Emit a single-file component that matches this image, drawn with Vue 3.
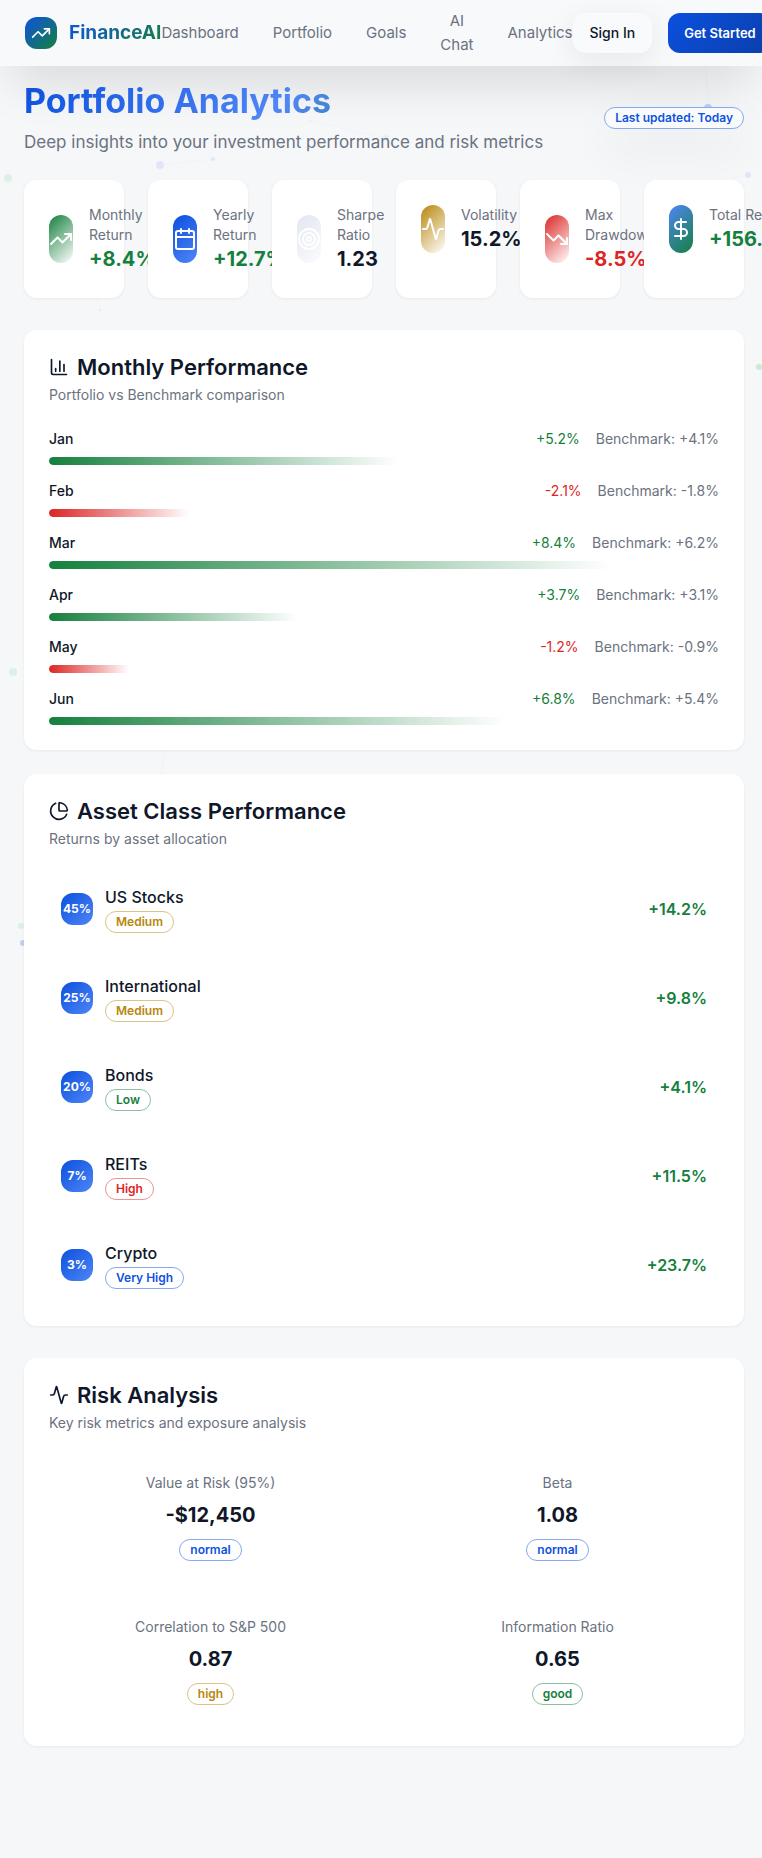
<script setup>
const navLinks = ['Dashboard', 'Portfolio', 'Goals', 'AI Chat', 'Analytics']

const metrics = [
  { label: 'Monthly Return', value: '+8.4%', tone: 'up', fill: 'green', icon: 'trending-up' },
  { label: 'Yearly Return', value: '+12.7%', tone: 'up', fill: 'blue', icon: 'calendar' },
  { label: 'Sharpe Ratio', value: '1.23', tone: 'plain', fill: 'pale', icon: 'target' },
  { label: 'Volatility', value: '15.2%', tone: 'plain', fill: 'gold', icon: 'activity' },
  { label: 'Max Drawdown', value: '-8.5%', tone: 'down', fill: 'red', icon: 'trending-down' },
  { label: 'Total Return', value: '+156.8%', tone: 'up', fill: 'mixed', icon: 'dollar' },
]

const months = [
  { name: 'Jan', change: 5.2, benchmark: '+4.1%' },
  { name: 'Feb', change: -2.1, benchmark: '-1.8%' },
  { name: 'Mar', change: 8.4, benchmark: '+6.2%' },
  { name: 'Apr', change: 3.7, benchmark: '+3.1%' },
  { name: 'May', change: -1.2, benchmark: '-0.9%' },
  { name: 'Jun', change: 6.8, benchmark: '+5.4%' },
]

const assets = [
  { name: 'US Stocks', share: '45%', risk: 'Medium', tone: 'gold', gain: '+14.2%' },
  { name: 'International', share: '25%', risk: 'Medium', tone: 'gold', gain: '+9.8%' },
  { name: 'Bonds', share: '20%', risk: 'Low', tone: 'green', gain: '+4.1%' },
  { name: 'REITs', share: '7%', risk: 'High', tone: 'red', gain: '+11.5%' },
  { name: 'Crypto', share: '3%', risk: 'Very High', tone: 'blue', gain: '+23.7%' },
]

const risks = [
  { label: 'Value at Risk (95%)', value: '-$12,450', status: 'normal', tone: 'blue' },
  { label: 'Beta', value: '1.08', status: 'normal', tone: 'blue' },
  { label: 'Correlation to S&P 500', value: '0.87', status: 'high', tone: 'gold' },
  { label: 'Information Ratio', value: '0.65', status: 'good', tone: 'green' },
]

const icons = {
  'trending-up': ['M22 7 13.5 15.5 8.5 10.5 2 17', 'M16 7h6v6'],
  'trending-down': ['M22 17 13.5 8.5 8.5 13.5 2 7', 'M16 17h6v-6'],
  calendar: ['M8 2v4', 'M16 2v4', 'M5 4h14a2 2 0 0 1 2 2v14a2 2 0 0 1-2 2H5a2 2 0 0 1-2-2V6a2 2 0 0 1 2-2z', 'M3 10h18'],
  target: ['M12 2a10 10 0 1 0 0 20 10 10 0 1 0 0-20z', 'M12 6a6 6 0 1 0 0 12 6 6 0 1 0 0-12z', 'M12 10a2 2 0 1 0 0 4 2 2 0 1 0 0-4z'],
  activity: ['M22 12h-2.48a2 2 0 0 0-1.93 1.46l-2.35 8.36a.25.25 0 0 1-.48 0L9.24 2.18a.25.25 0 0 0-.48 0l-2.35 8.36A2 2 0 0 1 4.49 12H2'],
  dollar: ['M12 2v20', 'M17 5H9.5a3.5 3.5 0 0 0 0 7h5a3.5 3.5 0 0 1 0 7H6'],
  chart: ['M3 3v16a2 2 0 0 0 2 2h16', 'M18 17V9', 'M13 17V5', 'M8 17v-3'],
  pie: ['M21 12c.552 0 1.005-.449.95-.998a10 10 0 0 0-8.953-8.951c-.55-.055-.998.398-.998.95v8a1 1 0 0 0 1 1z', 'M21.21 15.89A10 10 0 1 1 8 2.83'],
}

const dots = [
  { x: 8, y: 178, r: 4, c: 'green' },
  { x: 160, y: 165, r: 4, c: 'blue' },
  { x: 213, y: 159, r: 2, c: 'blue' },
  { x: 310, y: 121, r: 1, c: 'green' },
  { x: 386, y: 138, r: 3, c: 'faint' },
  { x: 708, y: 108, r: 4, c: 'strong' },
  { x: 748, y: 175, r: 3, c: 'blue' },
  { x: 100, y: 310, r: 1, c: 'green' },
  { x: 759, y: 367, r: 3, c: 'vivid' },
  { x: 13, y: 672, r: 4, c: 'green' },
  { x: 21, y: 926, r: 3, c: 'green' },
  { x: 23, y: 943, r: 3, c: 'strong' },
]

const signed = (n) => `${n > 0 ? '+' : ''}${n}%`
</script>

<template>
  <div class="page">
    <svg class="particles" aria-hidden="true">
      <path d="M160 165 213 159M310 121 386 138M706 60 708 108M97 296 100 310M165 748 161 776M748 175 730 178" />
      <circle v-for="(d, i) in dots" :key="i" :cx="d.x" :cy="d.y" :r="d.r" :class="d.c" />
    </svg>

    <header class="topbar">
      <a class="brand" href="#">
        <span class="logo">
          <svg class="icon" viewBox="0 0 24 24"><path v-for="p in icons['trending-up']" :key="p" :d="p" /></svg>
        </span>
        <span class="brand-name">FinanceAI</span>
      </a>
      <nav class="nav">
        <a v-for="l in navLinks" :key="l" href="#">{{ l }}</a>
      </nav>
      <div class="actions">
        <button class="btn ghost" type="button">Sign In</button>
        <button class="btn primary" type="button">Get Started</button>
      </div>
    </header>

    <main class="main">
      <div class="intro">
        <div>
          <h1>Portfolio Analytics</h1>
          <p>Deep insights into your investment performance and risk metrics</p>
        </div>
        <span class="badge blue glow">Last updated: Today</span>
      </div>

      <section class="metrics">
        <article v-for="m in metrics" :key="m.label" class="card metric">
          <div class="metric-body">
            <span class="pill" :class="m.fill">
              <svg class="icon" viewBox="0 0 24 24"><path v-for="p in icons[m.icon]" :key="p" :d="p" /></svg>
            </span>
            <div class="metric-text">
              <p class="label">{{ m.label }}</p>
              <p class="value" :class="m.tone">{{ m.value }}</p>
            </div>
          </div>
        </article>
      </section>

      <div class="stack">
        <section class="card">
          <div class="card-head">
            <h2><svg class="icon" viewBox="0 0 24 24"><path v-for="p in icons.chart" :key="p" :d="p" /></svg>Monthly Performance</h2>
            <p>Portfolio vs Benchmark comparison</p>
          </div>
          <div class="months">
            <div v-for="m in months" :key="m.name" class="month">
              <div class="month-row">
                <span class="month-name">{{ m.name }}</span>
                <span class="figures">
                  <span :class="m.change > 0 ? 'up' : 'down'">{{ signed(m.change) }}</span>
                  <span class="muted">Benchmark: {{ m.benchmark }}</span>
                </span>
              </div>
              <div class="track">
                <div class="bar" :class="m.change > 0 ? 'gain' : 'loss'" :style="{ width: Math.abs(m.change) * 10 + '%' }"></div>
              </div>
            </div>
          </div>
        </section>

        <section class="card">
          <div class="card-head">
            <h2><svg class="icon" viewBox="0 0 24 24"><path v-for="p in icons.pie" :key="p" :d="p" /></svg>Asset Class Performance</h2>
            <p>Returns by asset allocation</p>
          </div>
          <div class="assets">
            <div v-for="a in assets" :key="a.name" class="asset">
              <span class="share">{{ a.share }}</span>
              <div class="asset-info">
                <p>{{ a.name }}</p>
                <div class="badge-line"><span class="badge" :class="a.tone">{{ a.risk }}</span></div>
              </div>
              <span class="asset-gain up">{{ a.gain }}</span>
            </div>
          </div>
        </section>
      </div>

      <section class="card">
        <div class="card-head">
          <h2><svg class="icon" viewBox="0 0 24 24"><path v-for="p in icons.activity" :key="p" :d="p" /></svg>Risk Analysis</h2>
          <p>Key risk metrics and exposure analysis</p>
        </div>
        <div class="risks">
          <div v-for="r in risks" :key="r.label" class="risk">
            <p class="label">{{ r.label }}</p>
            <p class="value">{{ r.value }}</p>
            <div class="badge-line"><span class="badge" :class="r.tone">{{ r.status }}</span></div>
          </div>
        </div>
      </section>
    </main>
  </div>
</template>

<style>
body {
  background: #f5f7f9;
}
</style>

<style scoped>
.page {
  position: relative;
  overflow: hidden;
  min-height: 100vh;
  font-family: Inter, "Liberation Sans", sans-serif;
  font-size: 15px;
  line-height: 24px;
  color: #0f1729;
}

.page,
.page * {
  box-sizing: border-box;
}

h1,
h2,
p {
  margin: 0;
}

a {
  color: inherit;
  text-decoration: none;
}

.particles {
  position: absolute;
  top: 0;
  left: 0;
  width: 100%;
  height: 100%;
}

.particles path {
  stroke: #0f52e0;
  stroke-opacity: 0.025;
  fill: none;
}

.particles .blue {
  fill: #dfe7f6;
}

.particles .faint {
  fill: #e8edf7;
}

.particles .strong {
  fill: #c0d0f3;
}

.particles .green {
  fill: #dcf0e6;
}

.particles .vivid {
  fill: #c6ecd6;
}

.icon {
  display: block;
  flex: none;
  width: 24px;
  height: 24px;
  fill: none;
  stroke: currentColor;
  stroke-width: 2;
  stroke-linecap: round;
  stroke-linejoin: round;
}

.topbar {
  position: relative;
  display: flex;
  align-items: center;
  justify-content: space-between;
  padding: 8px 24px;
  border: 1px solid #f8fafb;
  background: #f8f9fb;
  box-shadow: 0 25px 50px -12px rgba(0, 0, 0, 0.15);
}

.brand {
  display: flex;
  flex: none;
  align-items: center;
  gap: 12px;
}

.logo {
  display: flex;
  align-items: center;
  justify-content: center;
  width: 32px;
  height: 32px;
  border-radius: 12px;
  color: #fff;
  background: linear-gradient(135deg, #0f52e0, #15803d);
}

.logo .icon {
  width: 20px;
  height: 20px;
}

.brand-name {
  font-size: 19px;
  line-height: 28px;
  font-weight: 700;
  color: transparent;
  background: linear-gradient(135deg, #0f52e0, #15803d);
  background-clip: text;
}

.nav {
  display: flex;
  align-items: center;
  gap: 34px;
  text-align: center;
  color: #6b7280;
}

.actions {
  display: flex;
  flex: none;
  gap: 16px;
}

.btn {
  height: 40px;
  padding: 0 16px;
  border: 0;
  border-radius: 12px;
  font: inherit;
  font-size: 14px;
  font-weight: 500;
  white-space: nowrap;
}

.ghost {
  color: #0f1729;
  background: #f8fafb;
  border: 1px solid #fafbfc;
  box-shadow: 0 8px 32px rgba(15, 23, 41, 0.08);
}

.primary {
  font-size: 13px;
  font-weight: 600;
  color: #fff;
  background: linear-gradient(135deg, #0b50de, #0a3fac);
}

.main {
  position: relative;
  padding: 14px 18px 112px 24px;
}

.intro {
  display: flex;
  align-items: center;
  justify-content: space-between;
  margin-bottom: 24px;
}

.intro h1 {
  font-size: 34px;
  line-height: 42px;
  font-weight: 700;
  color: transparent;
  background: linear-gradient(135deg, #0b4fdc, #4f86f7 50%, #15803d);
  background-clip: text;
}

.intro p {
  margin-top: 6px;
  font-size: 17px;
  line-height: 28px;
  color: #6b7280;
}

.badge {
  display: inline-flex;
  align-items: center;
  padding: 2px 10px;
  border: 1px solid;
  border-radius: 9999px;
  font-size: 12px;
  line-height: 16px;
  font-weight: 600;
}

.badge.blue {
  color: #0f52e0;
  border-color: #87a9f0;
}

.badge.gold {
  color: #b8860b;
  border-color: #dcc386;
}

.badge.green {
  color: #15803d;
  border-color: #8ac09e;
}

.badge.red {
  color: #dc2626;
  border-color: #ee9393;
}

.badge.glow {
  background: #f8fafc;
  box-shadow: 0 20px 50px rgba(15, 23, 41, 0.07);
}

.badge-line {
  display: flex;
  align-items: flex-end;
  height: 24px;
}

.card {
  border: 1px solid #fff;
  border-radius: 12px;
  padding: 24px;
  background: #fff;
  box-shadow: 0 1px 3px rgba(15, 23, 41, 0.06);
}

.metrics {
  display: grid;
  grid-template-columns: repeat(6, minmax(0, 1fr));
  gap: 24px;
  margin-bottom: 32px;
}

.metric {
  position: relative;
}

.metric-body {
  display: flex;
  align-items: center;
  gap: 16px;
}

.metric-text {
  flex: 0 1 0;
}

.pill {
  display: flex;
  flex: none;
  align-items: center;
  justify-content: center;
  width: 24px;
  height: 48px;
  border-radius: 12px;
  color: #fff;
}

.pill.green {
  background: linear-gradient(135deg, #15803d, #fff);
}

.pill.blue {
  background: linear-gradient(135deg, #0b50de, #4f86f7);
}

.pill.pale {
  background: linear-gradient(135deg, #e2e6f0, #fbfcfd);
}

.pill.gold {
  background: linear-gradient(135deg, #b8860b, #fff);
}

.pill.red {
  background: linear-gradient(135deg, #dc2626, #fff);
}

.pill.mixed {
  background: linear-gradient(135deg, #4f86f7, #15803d);
}

.label {
  font-size: 14px;
  line-height: 20px;
  color: #6b7280;
}

.metric:last-child .label {
  white-space: nowrap;
}

.value {
  font-size: 20px;
  line-height: 28px;
  font-weight: 700;
}

.up {
  color: #15803d;
}

.down {
  color: #dc2626;
}

.muted {
  color: #6b7280;
}

.stack {
  display: grid;
  gap: 24px;
  margin-bottom: 32px;
}

.card-head {
  margin-bottom: 24px;
}

.card-head h2 {
  display: flex;
  align-items: center;
  gap: 8px;
  font-size: 22px;
  line-height: 24px;
  font-weight: 600;
}

.card-head .icon {
  width: 20px;
  height: 20px;
}

.card-head p {
  margin-top: 6px;
  font-size: 14px;
  line-height: 20px;
  color: #6b7280;
}

.months {
  display: grid;
  gap: 16px;
}

.month {
  display: grid;
  gap: 8px;
}

.month-row {
  display: flex;
  justify-content: space-between;
  font-size: 14px;
  line-height: 20px;
}

.month-name {
  font-weight: 500;
}

.figures {
  display: flex;
  gap: 16px;
}

.track {
  height: 8px;
  border-radius: 9999px;
  overflow: hidden;
}

.bar {
  height: 100%;
  border-radius: 9999px;
}

.gain {
  background: linear-gradient(90deg, #15803d, #fff);
}

.loss {
  background: linear-gradient(90deg, #dc2626, #fff);
}

.assets {
  display: grid;
  gap: 17px;
}

.asset {
  display: flex;
  align-items: center;
  gap: 12px;
  padding: 12px;
}

.share {
  display: flex;
  align-items: center;
  justify-content: center;
  flex: none;
  width: 32px;
  height: 32px;
  border-radius: 12px;
  font-size: 12px;
  line-height: 16px;
  font-weight: 700;
  color: #fff;
  background: linear-gradient(135deg, #0b50de, #4f86f7);
}

.asset-info {
  flex: 1;
}

.asset-info p {
  font-size: 16px;
  font-weight: 500;
}

.asset-gain {
  font-size: 16px;
  font-weight: 600;
}

.risks {
  display: grid;
  grid-template-columns: 1fr 1fr;
  gap: 24px;
}

.risk {
  padding: 16px;
  text-align: center;
}

.risk .value,
.risk .badge-line {
  margin-top: 8px;
}

.risk .badge-line {
  justify-content: center;
}
</style>
